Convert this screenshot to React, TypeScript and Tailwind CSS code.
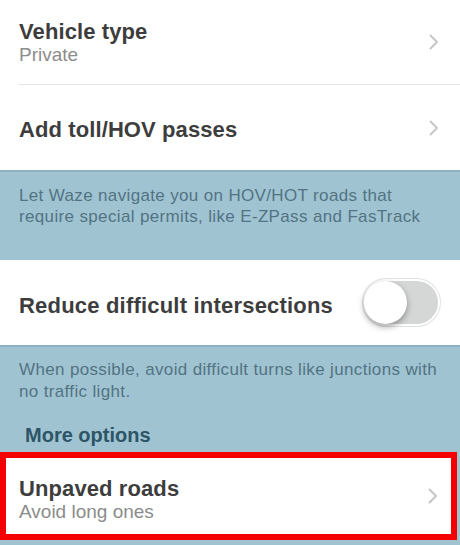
import React from "react";

function Chevron() {
  return (
    <svg width="12" height="18" viewBox="0 0 12 18" fill="none" className="shrink-0">
      <path d="M2.5 2.5 L9 9 L2.5 15.5" stroke="#c4c4c8" strokeWidth="1.8" strokeLinecap="round" strokeLinejoin="round" />
    </svg>
  );
}

export default function App() {
  const font = { fontFamily: '"Liberation Sans", Arial, sans-serif' };
  return (
    <div className="w-[460px] h-[545px] overflow-hidden bg-[#a0c3d2]" style={font}>
      {/* white top group */}
      <div className="bg-white">
        <div className="h-[84px] flex items-center pl-[19px] pr-[20px]">
          <div className="flex-1 flex flex-col pt-[1px]">
            <span className="text-[22px] leading-[24px] font-bold tracking-[0.1px] text-[#3d3d3d]">Vehicle type</span>
            <span className="text-[19px] leading-[22px] text-[#8c8c8c]">Private</span>
          </div>
          <Chevron />
        </div>
        <div className="ml-[18px] h-px bg-[#e6e6e6]" />
        <div className="h-[85px] flex items-center pl-[19px] pr-[20px]">
          <span className="flex-1 pt-[3px] text-[22px] font-bold tracking-[0.1px] text-[#3d3d3d]">Add toll/HOV passes</span>
          <Chevron />
        </div>
      </div>
      {/* blue note */}
      <div className="h-[90px] border-t-[2px] border-[#8fb2c3] pl-[19px] pt-[13px]">
        <p className="text-[17px] leading-[21px] tracking-[0.35px] text-[#527482] whitespace-nowrap">
          Let Waze navigate you on HOV/HOT roads that
          <br />
          require special permits, like E-ZPass and FasTrack
        </p>
      </div>
      {/* toggle row */}
      <div className="bg-white h-[85px] flex items-center pl-[19px] pr-[20px]">
        <span className="flex-1 pt-[6px] text-[22px] font-bold tracking-[0.2px] text-[#3d3d3d]">Reduce difficult intersections</span>
        <div className="relative w-[77px] h-[47px] rounded-full bg-[#d5d7d7] border-[2px] border-white shadow-[0_0_0_1px_#e3e3e3]">
          <div className="absolute left-[-1px] top-[0px] w-[43px] h-[43px] rounded-full bg-white shadow-[0_3px_6px_rgba(0,0,0,0.35)]" />
        </div>
      </div>
      {/* blue note 2 */}
      <div className="h-[107px] border-t-[2px] border-[#8fb2c3] pl-[19px] pt-[12px]">
        <p className="text-[17px] leading-[22px] tracking-[0.35px] text-[#527482] whitespace-nowrap">
          When possible, avoid difficult turns like junctions with
          <br />
          no traffic light.
        </p>
        <div className="pl-[6px] mt-[17px] text-[20px] font-bold text-[#2d5566]">More options</div>
      </div>
      {/* highlighted row */}
      <div className="w-[457px] h-[88px] border-[6px] border-[#f50000] bg-white flex items-center pl-[13px] pr-[12px]">
        <div className="flex-1 flex flex-col pt-[7px]">
          <span className="text-[22px] leading-[24px] font-bold tracking-[0.1px] text-[#3d3d3d]">Unpaved roads</span>
          <span className="text-[19px] leading-[22px] text-[#8c8c8c]">Avoid long ones</span>
        </div>
        <Chevron />
      </div>
    </div>
  );
}
